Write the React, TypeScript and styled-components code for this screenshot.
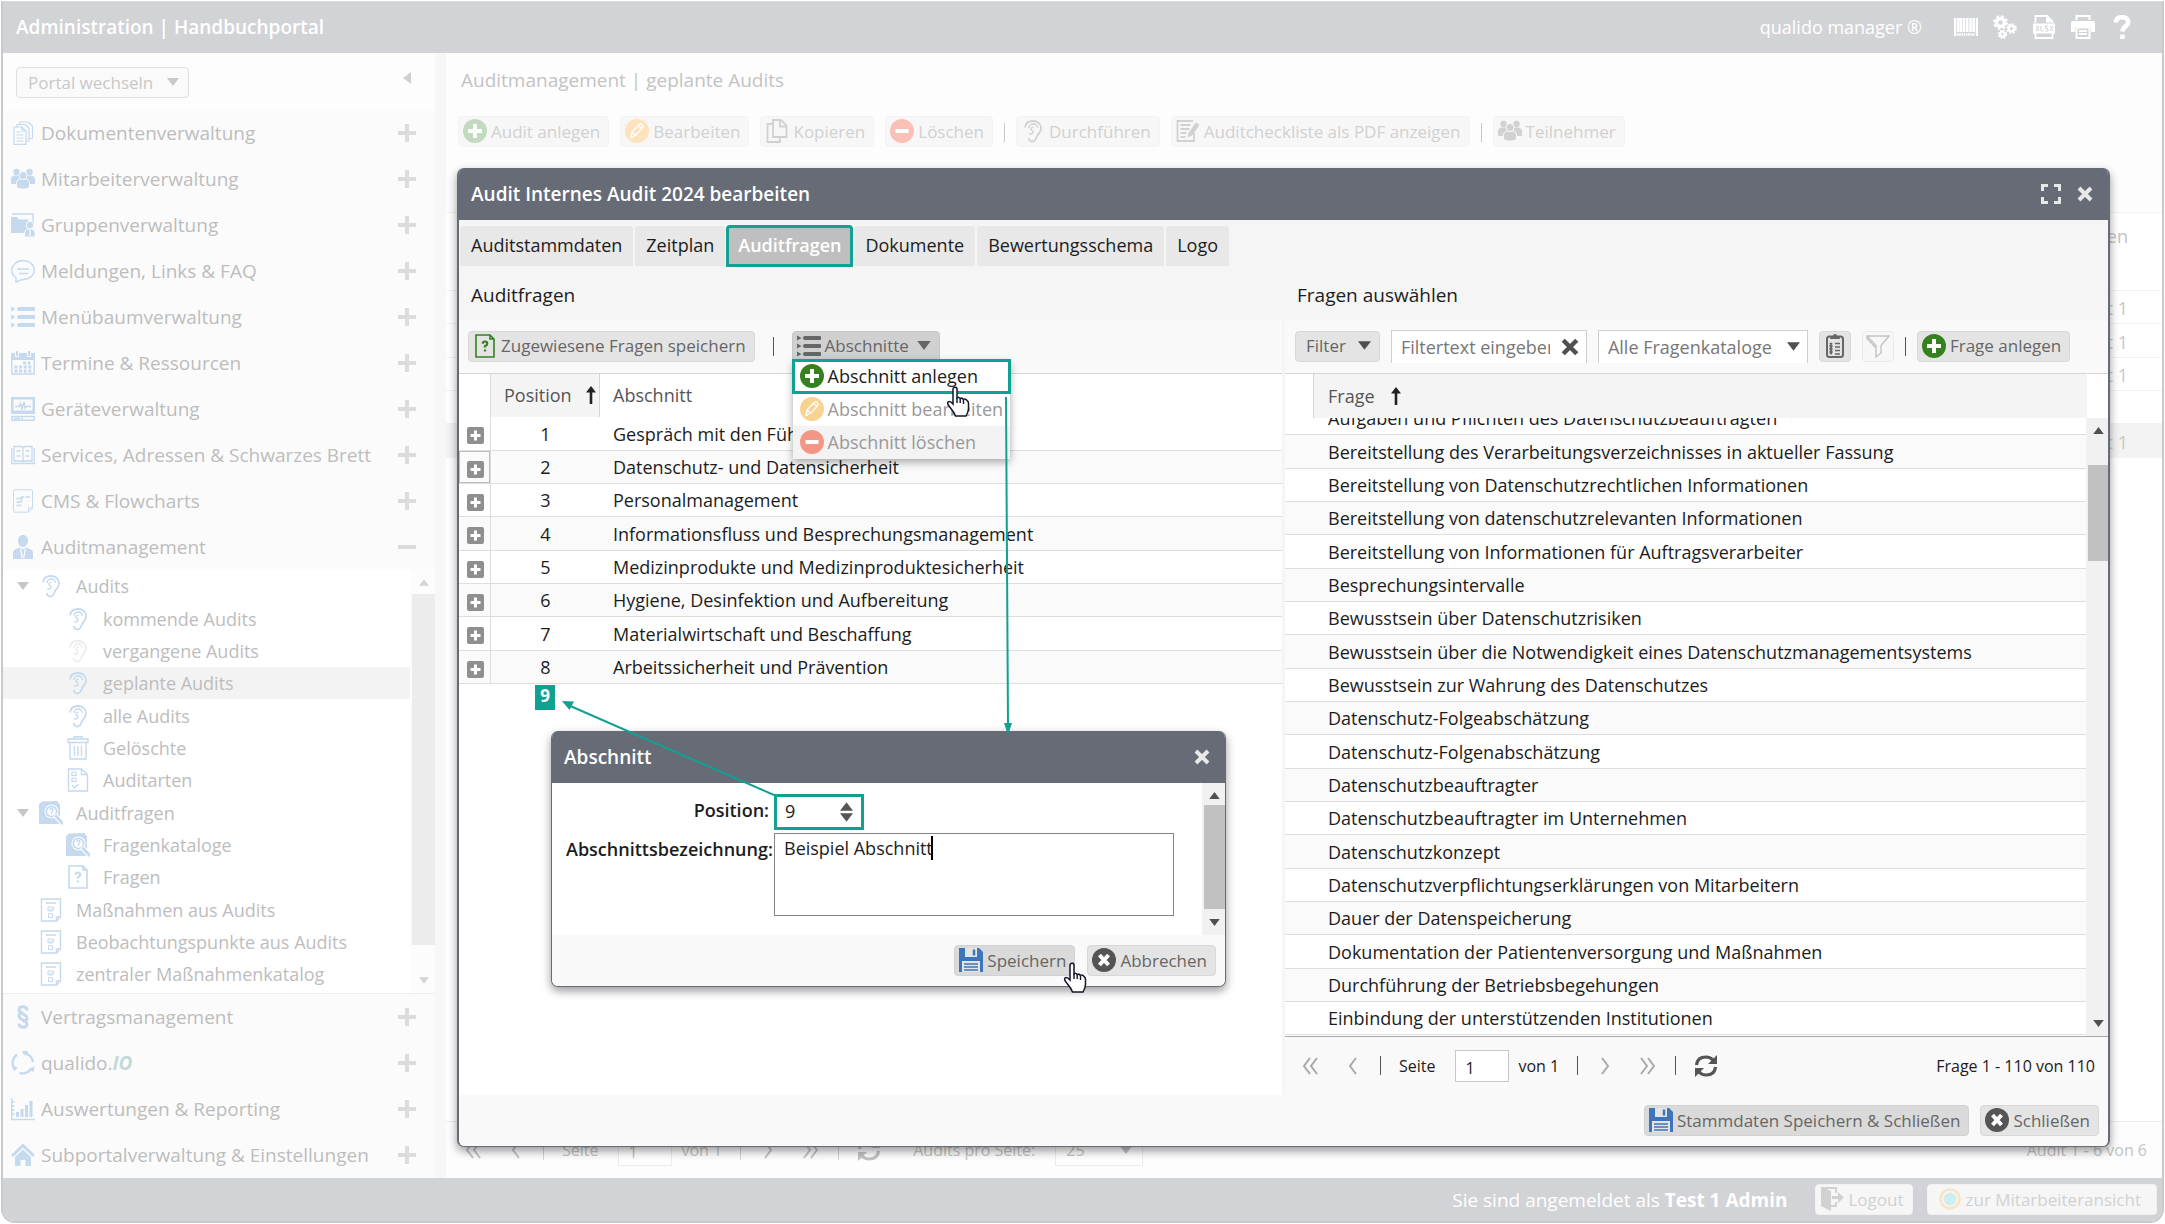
import React from "react";
import styled, { createGlobalStyle, css } from "styled-components";

const GREEN = "#10a192";
const SLATE = "#666b76";

const GlobalStyle = createGlobalStyle`
  *, *::before, *::after { box-sizing: border-box; }
  body { margin: 0; background: #fff; font-family: "Open Sans", "Noto Sans", sans-serif; font-size: 18px; color: #1c1c1c; }
  button, input, select, textarea { font: inherit; color: inherit; margin: 0; }
  button { cursor: pointer; }
  h1, h2, p { margin: 0; font-weight: inherit; font-size: inherit; }
`;

/* ---------- icons ---------- */

const Svg = styled.svg<{ $w?: number; $h?: number }>`
  display: block;
  flex: none;
  width: ${(p) => p.$w ?? 24}px;
  height: ${(p) => p.$h ?? p.$w ?? 24}px;
  fill: none;
  stroke: currentColor;
  stroke-width: 1.4;
`;

type IconProps = { color?: string };
const solid = { fill: "currentColor", stroke: "none" };

const PlusCircle = ({ color = "#35801f" }: IconProps) => (
  <Svg viewBox="0 0 24 24" aria-hidden="true">
    <circle cx="12" cy="12" r="12" fill={color} stroke="none" />
    <path d="M12 5v14M5 12h14" stroke="#fff" strokeWidth="4" />
  </Svg>
);
const MinusCircle = ({ color = "#f39685" }: IconProps) => (
  <Svg viewBox="0 0 24 24" aria-hidden="true">
    <circle cx="12" cy="12" r="12" fill={color} stroke="none" />
    <path d="M5.500 12h13" stroke="#fff" strokeWidth="4" />
  </Svg>
);
const PencilCircle = ({ color = "#f8d290" }: IconProps) => (
  <Svg viewBox="0 0 24 24" aria-hidden="true">
    <circle cx="12" cy="12" r="12" fill={color} stroke="none" />
    <path d="M6 18.500l1-5.500 7.500-8q2-1 4 2.500L11 16zM7 13l4 3M13 6.500l4 3" stroke="#fff" strokeWidth="1.300" />
  </Svg>
);
const CloseCircle = () => (
  <Svg viewBox="0 0 24 24" aria-hidden="true">
    <circle cx="12" cy="12" r="12" fill="#555" stroke="none" />
    <path d="M7.500 7l9 10M16.500 7l-9 10" stroke="#fff" strokeWidth="4" />
  </Svg>
);
const Floppy = () => (
  <Svg viewBox="0 0 24 24" aria-hidden="true">
    <path d="M0 0h20l4 4v20H0z" fill="#3c75bb" stroke="none" />
    <path d="M6 0h12v9H6zM3 13h18v11H3z" fill="#e4e4e4" stroke="none" />
    <path d="M15 1.500v6" stroke="#3c75bb" strokeWidth="2.500" />
    <path d="M5 16h14M5 19h14M5 22h14" stroke="#3c75bb" strokeWidth="1.500" />
  </Svg>
);
const Ear = () => (
  <Svg viewBox="0 0 24 24" aria-hidden="true">
    <path d="M4 8.500C4.500 4 8 2 12 2c4.700 0 8 3 8 7.500 0 4-3 5-4.200 8.200C15 20 14 22.500 11.500 22.500S8 21 7.800 19" strokeWidth="1.800" />
    <path d="M8 9c0-2.500 2-4 4.200-4 2.400 0 4.300 1.800 4.300 4M12.500 8.500c-1.500-.5-2.700.5-2.500 1.800.2 1.200 2 1 2 2.700 0 1.800-2.200 2.500-4 1.500" />
  </Svg>
);
const People = () => (
  <Svg viewBox="0 0 24 24" aria-hidden="true">
    <g {...solid}>
      <circle cx="5.500" cy="5" r="3.200" />
      <circle cx="18.500" cy="5" r="3.200" />
      <path d="M0 16v-4c0-2 2-3.500 4.500-3.500H9l2 8.500H1q-1 0-1-1zM24 16v-4c0-2-2-3.500-4.500-3.500H15L13 17h10q1 0 1-1z" />
    </g>
    <g fill="currentColor" stroke="#fafafa" strokeWidth="1">
      <path d="M5.500 19v-3c0-2.500 2-4 4.500-4h4c2.500 0 4.500 1.500 4.500 4v3c0 2-2.500 3-6.500 3s-6.500-1-6.500-3z" />
      <circle cx="12" cy="8.500" r="4" />
    </g>
  </Svg>
);
const Docs = () => (
  <Svg viewBox="0 0 24 24" aria-hidden="true">
    <path d="M3 6h8l4 4v13.300H3zM11 6v4h4M6 6V3.500h8.500l3.500 4V20h-3M9 3.500V1h8.500L21.500 5v12.500H18" strokeWidth="1.200" />
    <path d="M5.500 11h4M5.500 14h7M5.500 17h7M5.500 20h7" strokeWidth="1.200" />
  </Svg>
);
const FolderUser = () => (
  <Svg viewBox="0 0 24 24" aria-hidden="true">
    <path d="M2 2V1h20v10" />
    <path {...solid} d="M0 4h6l2 2.500h9V20H0z" />
    <g fill="currentColor" stroke="#fafafa" strokeWidth="1">
      <path d="M13.500 24v-4q0-3.500 3.500-4h4q3 .5 3 4v4z" />
      <circle cx="19" cy="12" r="3.800" />
    </g>
    <path d="M19 17v6" stroke="#fafafa" />
  </Svg>
);
const Speech = () => (
  <Svg viewBox="0 0 24 24" aria-hidden="true">
    <path d="M5 23.300V18.500C2.300 17 .8 14.500.8 11.500.8 6 5.800 1.500 12 1.500s11.200 4.200 11.200 9.700S18 20.500 12 20.500q-4 .3-7 2.800zM6 10h12M8 14.500h9" />
  </Svg>
);
const ListIcon = () => (
  <Svg viewBox="0 0 24 24" aria-hidden="true">
    <path {...solid} d="M0 1.500l4.500 2.500L0 6.500zM0 9.500L4.500 12 0 14.500zM0 17.500L4.500 20 0 22.500z" />
    <path d="M8 4h14.500M8 12h14.500M8 20h14.500" strokeWidth="4" strokeLinecap="round" />
  </Svg>
);
const Calendar = () => (
  <Svg viewBox="0 0 24 24" aria-hidden="true">
    <path d="M.8 3h22.400v20H.8z" />
    <path {...solid} d="M0 2h24v7H0z" />
    <path d="M6 0v6M18 0v6" stroke="#fafafa" strokeWidth="4" />
    <path d="M6 0v5M18 0v5" strokeWidth="2" />
    <path d="M3.500 20h17M3.500 16h17M12 12h8.500" strokeWidth="3" strokeDasharray="3 1.600" />
  </Svg>
);
const Monitor = () => (
  <Svg viewBox="0 0 24 24" aria-hidden="true">
    <path {...solid} d="M0 0h24v17H0z" />
    <path d="M2.500 2.500h19v11h-19z" fill="#fafafa" stroke="none" />
    <path d="M4 9.500h4l1.500-3L11 12l2-7 1 6 1.500-1.500H20" strokeWidth="1.600" />
    <path d="M.8 19.500h22.400v3.800H.8zM11 19.500v3.800M3 21.500h6" />
  </Svg>
);
const Book = () => (
  <Svg viewBox="0 0 24 24" aria-hidden="true">
    <path d="M.8 5v15.500h22.400V5M3 18V3.500h6.500q2.500 0 2.500 1.500 0-1.500 2.500-1.500H21V18h-7q-2 0-2 1.500Q12 18 10 18zM12 5v14M5.500 8h4M5.500 13h4M14.500 8h4M14.500 13h4" strokeWidth="1.300" />
  </Svg>
);
const Flow = () => (
  <Svg viewBox="0 0 24 24" aria-hidden="true">
    <path d="M4 .8h16q1.500 0 1.500 1.500V19l-4 4.200H4q-1.500 0-1.500-1.500V2.300Q2.500.8 4 .8zM21.500 19h-4v4" strokeWidth="1" />
    <path d="M5.500 9.500h5M5.500 13h5M5.500 16.500h5M10.500 13V8h3M15 8h4" />
  </Svg>
);
const UserTie = () => (
  <Svg viewBox="0 0 24 24" aria-hidden="true">
    <path {...solid} d="M12 0c3.200 0 5 2.300 5 5.500S15 12 12 12 7 8.700 7 5.500 8.800 0 12 0zM2 24v-6q0-3 3-4l4-1.500 3 2 3-2 4 1.500q3 1 3 4v6z" />
    <path d="M9.500 13.500L11.300 23M14.500 13.500L12.700 23" stroke="#fafafa" />
  </Svg>
);
const Paragraph = () => (
  <Svg viewBox="0 0 24 24" aria-hidden="true">
    <path d="M16 5.500Q16 1.800 12 1.800T8 5c0 3.500 8 4 8 8 0 2.500-2 3.500-4 3.500M8 18.500Q8 22.200 12 22.200T16 19c0-3.500-8-4-8-8 0-2.500 2-3.500 4-3.500" strokeWidth="3" />
  </Svg>
);
const Cycle = () => (
  <Svg viewBox="0 0 24 24" aria-hidden="true">
    <path d="M12 1.800A10.500 10.500 0 0 1 22 11M20.500 17A10.500 10.500 0 0 1 8.500 22M3.500 18A10.500 10.500 0 0 1 6 3.500" strokeWidth="2.400" />
    <path {...solid} d="M11 0h6l-2 5zM23.500 15l-1 6-4.500-2zM1 14l6 3-4 3z" />
  </Svg>
);
const Chart = () => (
  <Svg viewBox="0 0 24 24" aria-hidden="true">
    <path d="M.8 1v21.500H24M1 5h2.500M1 9h2.500M1 13h2.500M1 17h2.500" />
    <path d="M6.500 20v-5M11 20v-8M15.500 20V8M20 20V4" strokeWidth="3" />
  </Svg>
);
const House = () => (
  <Svg viewBox="0 0 24 24" aria-hidden="true">
    <path d="M1 13L12 2.500 23 13" strokeWidth="3" />
    <path {...solid} d="M4 14l8-7.500 8 7.500v9h-5.500v-6h-5v6H4z" />
  </Svg>
);
const Trash = () => (
  <Svg viewBox="0 0 24 24" aria-hidden="true">
    <path d="M2 3h20v3.500H2zM8 3V.8h8V3M4 6.500V23h16V6.500M8.500 10v10M12 10v10M15.500 10v10" />
  </Svg>
);
const SheetList = () => (
  <Svg viewBox="0 0 24 24" aria-hidden="true">
    <path d="M2.500 1h13l6 5.500V23h-19zM15.500 1v5.500h6" />
    <path d="M6 4h4v3.500H6zM6 10h4v3.500H6zM6 17l2.500 3 4-4" strokeWidth="1.200" />
  </Svg>
);
const BookSearch = () => (
  <Svg viewBox="0 0 24 24" aria-hidden="true">
    <path {...solid} d="M0 3l3-2.500L19 0v2l2 1v18l-1 2H0z" />
    <circle cx="12.500" cy="10.500" r="7" fill="#fff" stroke="none" />
    <circle cx="12.500" cy="10.500" r="5.200" strokeWidth="1.800" />
    <path d="M16 14l8 9" stroke="#fff" strokeWidth="5" />
    <path d="M16.500 14.500l7.500 8.500" strokeWidth="3" />
    <path d="M11 9.500q0-2 1.500-2T14 9t-1.500 2v2" strokeWidth="1.300" />
  </Svg>
);
const SheetQuestion = ({ color }: IconProps) => (
  <Svg viewBox="0 0 24 24" aria-hidden="true" color={color}>
    <path d="M3 1h14l4 4v18H3zM17 1v4h4" strokeWidth="1.600" />
    <path d="M9.800 9.800q0-2.300 2.200-2.300t2.200 2-2.200 2.500v1.500M12 15.500v2" strokeWidth="2.200" />
  </Svg>
);
const SheetCheck = () => (
  <Svg viewBox="0 0 24 24" aria-hidden="true">
    <path d="M2.500 1h19v18l-4 4h-15zM21.500 19h-4v4M7 5h10" />
    <path d="M9 9h5v4H9zM10 11l2 1.500L15.500 9M9.500 15.500h4v4h-4z" strokeWidth="1" />
  </Svg>
);
const CopyIcon = () => (
  <Svg viewBox="0 0 24 24" aria-hidden="true">
    <path d="M8 1h8l5.500 5.500V18H8zM15 1v6.500h6.500M8 5H2.500v18H15v-5" strokeWidth="1.800" />
  </Svg>
);
const Checklist = () => (
  <Svg viewBox="0 0 24 24" aria-hidden="true">
    <path d="M17 2H1.500v20H18v-8M4.500 6h10M4.500 10h9M4.500 14h6M4.500 18h5" strokeWidth="1.800" />
    <path d="M13 14L20 4l3 2-7 10-4 2z" fill="currentColor" strokeWidth="1" />
  </Svg>
);
const Logout = () => (
  <Svg viewBox="0 0 24 24" aria-hidden="true">
    <path d="M2 1h14v5M16 15v4h-5" strokeWidth="2" />
    <path {...solid} d="M1 0l10 4v20L1 19zM12 9h6V5l6 5.500-6 5.500v-4h-6z" />
  </Svg>
);
const Sun = () => (
  <Svg viewBox="0 0 24 24" aria-hidden="true">
    <circle cx="12" cy="12" r="9.500" stroke="#fae3c3" strokeWidth="2.500" />
    <circle cx="12" cy="12" r="6.500" fill="#cfeeee" stroke="none" />
  </Svg>
);
const Barcode = () => (
  <Svg viewBox="0 0 24 24" aria-hidden="true">
    <path d="M1 3v18M4.200 3v14M7 3v14M10 3v14M13.200 3v14M16.500 3v14M19.600 3v14M23 3v18" strokeWidth="2.500" />
    <path d="M3 19.500h18" strokeWidth="2.500" strokeDasharray="1.500 .7" />
  </Svg>
);
const Gears = () => (
  <Svg viewBox="0 0 24 24" aria-hidden="true">
    <circle cx="7.500" cy="7.500" r="4" strokeWidth="3.500" />
    <circle cx="7.500" cy="7.500" r="6.300" strokeWidth="2.200" strokeDasharray="2.600 2.350" />
    <circle cx="18.500" cy="13.500" r="2.800" strokeWidth="2.600" />
    <circle cx="18.500" cy="13.500" r="4.600" strokeWidth="1.600" strokeDasharray="1.900 1.710" />
    <circle cx="9.500" cy="19.300" r="2.400" strokeWidth="2.400" />
    <circle cx="9.500" cy="19.300" r="4" strokeWidth="1.400" strokeDasharray="1.700 1.440" />
  </Svg>
);
const Xlsx = () => (
  <Svg viewBox="0 0 24 24" aria-hidden="true">
    <path d="M3.500 8V1H15l5.500 5.500V8M3.500 18v5h17v-5" strokeWidth="1.800" />
    <path {...solid} d="M14 1v6.500h6.500zM1 8.500h22v10H1z" />
    <path d="M4 11l3 5M7 11l-3 5M9 11v5h2.500M16 11h-2.500v2.500H16V16h-2.500M18 11l3 5M21 11l-3 5" stroke="#d2d3d7" strokeWidth="1" />
  </Svg>
);
const Printer = () => (
  <Svg viewBox="0 0 24 24" aria-hidden="true">
    <path d="M5.500 5V1h13v4" strokeWidth="2" />
    <path {...solid} d="M2 6h20q2 0 2 2v9h-4v-5H4v5H0V8q0-2 2-2z" />
    <path d="M5.500 12.500h13V23h-13zM8 16h8M8 19h8" strokeWidth="2" />
  </Svg>
);
const Help = () => (
  <Svg viewBox="0 0 24 24" aria-hidden="true">
    <path d="M5.800 7.500C6 3.800 8.500 2.200 12 2.200s6.200 1.600 6.200 4.800c0 4.500-5.700 4-5.700 9.500M12.500 19.500V24" strokeWidth="4.600" />
  </Svg>
);
const PlusBar = ({ minus }: { minus?: boolean }) => (
  <Svg viewBox="0 0 18 18" $w={18} aria-hidden="true">
    <path d={minus ? "M0 9h18" : "M0 9h18M9 0v18"} stroke="#dcdcdc" strokeWidth="4" />
  </Svg>
);
const Caret = ({ up, size = 12 }: { up?: boolean; size?: number }) => (
  <Svg viewBox="0 0 12 8" $w={size} $h={Math.round((size * 2) / 3)} aria-hidden="true">
    <path {...solid} d={up ? "M0 8h12L6 0z" : "M0 0h12L6 8z"} />
  </Svg>
);
const SortUp = () => (
  <Svg viewBox="0 0 10 18" $w={10} $h={18} aria-hidden="true">
    <path d="M5 18V4" stroke="#222" strokeWidth="2.600" />
    <path d="M0 6.500L5 0l5 6.500z" fill="#222" stroke="none" />
  </Svg>
);
const Cross = ({ size = 16 }: { size?: number }) => (
  <Svg viewBox="0 0 16 16" $w={size} aria-hidden="true">
    <path d="M2 2l12 12M14 2L2 14" strokeWidth="4" />
  </Svg>
);
const Expand = () => (
  <Svg viewBox="0 0 20 20" $w={20} aria-hidden="true">
    <path d="M1.500 7V1.500H7M13 1.500h5.500V7M18.500 13v5.500H13M7 18.500H1.500V13" strokeWidth="3" />
  </Svg>
);
const Clipboard = () => (
  <Svg viewBox="0 0 24 24" aria-hidden="true">
    <rect x="4" y="2.500" width="16" height="20.500" rx="2.500" strokeWidth="2" />
    <path {...solid} d="M7 5q0-3 3-3 0-2 2-2t2 2q3 0 3 3z" />
    <path d="M7 9l2 3-2 3 2 3-2 2M9 9l-2 3 2 3-2 3 2 2M12 9.500h5M12 13h5M12 16.500h5M12 20h5" strokeWidth="1.500" />
  </Svg>
);
const Funnel = () => (
  <Svg viewBox="0 0 24 24" aria-hidden="true">
    <path d="M1 2h22l-8 9.500V19l-5 4V11.500zM1 2v2.500L10 14" />
  </Svg>
);
const Refresh = () => (
  <Svg viewBox="0 0 24 24" aria-hidden="true">
    <path d="M2.500 11C3 5.500 7 3 12 3q4.500 0 7.500 3.500M21.500 13c-.5 5.500-4.500 8-9.500 8q-4.500 0-7.500-3.500" strokeWidth="3.200" />
    <path {...solid} d="M23 1v9h-9zM1 23v-9h9z" />
  </Svg>
);
const Chevrons = ({ double, right }: { double?: boolean; right?: boolean }) => (
  <Svg viewBox="0 0 18 18" $w={18} aria-hidden="true">
    <path
      d={
        right
          ? double ? "M2 1l6 8-6 8M9 1l6 8-6 8" : "M6 1l6 8-6 8"
          : double ? "M9 1L3 9l6 8M16 1l-6 8 6 8" : "M12 1L6 9l6 8"
      }
      strokeWidth="2"
    />
  </Svg>
);
const ExpandBox = () => (
  <Svg viewBox="0 0 17 17" $w={17} aria-hidden="true">
    <rect width="17" height="17" rx="2" fill="#8f8f8f" stroke="none" />
    <path d="M8.500 3.500v10M3.500 8.500h10" stroke="#fff" strokeWidth="3" />
  </Svg>
);
const Hand = () => (
  <Svg viewBox="0 0 24 32" $w={24} $h={32} aria-hidden="true">
    <path
      d="M8 1.500q2-1 3 1V12q2-1.500 3 .5 2-1 3.200.8 2.500-.8 3.800 1.200 1.500.8 1.500 3v5q0 3-2.500 7.500H9.500Q8 26 4.500 22q-4-4.500-2.500-6 2-1.500 5 2V3q0-1 1-1.500z"
      fill="#fff" stroke="#15152a" strokeWidth="1.500"
    />
    <path d="M11 12v5M14.200 13v4M17.500 14v4" stroke="#15152a" />
  </Svg>
);

/* ---------- page shell ---------- */

const Page = styled.div`
  position: relative;
  min-height: 100vh;
  padding: 1px;
  display: flex;
`;
const Frame = styled.div`
  flex: 1;
  display: flex;
  flex-direction: column;
  border: 2px solid #c8c9cb;
  border-top: 1px solid #d9dcda;
  border-radius: 0 0 14px 14px;
  overflow: hidden;
`;
const TopBar = styled.header`
  display: flex;
  align-items: center;
  height: 51px;
  padding: 0 28px 1px 13px;
  background: #d2d3d7;
  color: #fff;
  font-size: 19px;
  font-weight: 550;
`;
const TopTools = styled.div`
  display: flex;
  align-items: center;
  gap: 15px;
  margin-left: auto;
  font-size: 18px;
  font-weight: 500;
  > span { margin-right: 17px; }
`;
const PlainButton = styled.button`
  display: flex;
  align-items: center;
  padding: 0;
  border: 0;
  background: none;
`;
const Middle = styled.div`
  flex: 1;
  display: flex;
  min-height: 0;
`;
const Footer = styled.footer`
  display: flex;
  align-items: center;
  justify-content: flex-end;
  gap: 14px;
  height: 43px;
  padding-right: 5px;
  background: #d2d3d7;
  color: #fff;
  font-size: 19px;
  p { margin-right: 14px; }
`;

/* ---------- sidebar ---------- */

const Sidebar = styled.nav`
  flex: none;
  width: 432px;
  display: flex;
  flex-direction: column;
  background: #fbfbfb;
  color: #bdbdbd;
`;
const SideHead = styled.div`
  display: flex;
  align-items: flex-start;
  justify-content: space-between;
  height: 57px;
  padding: 14px 24px 0 13px;
  background: #fdfdfd;
`;
const PortalButton = styled.button`
  display: flex;
  align-items: center;
  justify-content: space-between;
  width: 173px;
  height: 31px;
  padding: 0 9px 1px 11px;
  border: 1px solid #dfdfdf;
  border-radius: 4px;
  background: #fafafa;
  color: #c8c8c8;
  font-size: 17px;
`;
const Collapse = styled(PlainButton)`
  margin-top: 5px;
  color: #d0d0d0;
`;
const SideItem = styled.button`
  flex: none;
  display: flex;
  align-items: center;
  gap: 6px;
  height: 46px;
  padding: 0 19px 1px 8px;
  border: 0;
  background: none;
  font-size: 19px;
  text-align: left;
  > svg:first-child { color: #c5d9ef; }
  > span { flex: 1; }
  i { color: #c1dad9; font-weight: 700; }
`;
const TreeWrap = styled.div`
  flex: 1;
  display: flex;
  min-height: 0;
  border-bottom: 1px solid #efefef;
  background: #fff;
  overflow: hidden;
`;
const Tree = styled.div`
  flex: 1;
`;
const TreeRow = styled.button<{ $level: number; $active?: boolean; $muted?: boolean }>`
  display: flex;
  align-items: center;
  width: 100%;
  height: 32px;
  padding: 0 0 0 ${(p) => (p.$level === 2 ? 63 : 14)}px;
  border: 0;
  background: ${(p) => (p.$active ? "#f3f3f3" : "none")};
  font-size: 18px;
  text-align: left;
  &:nth-child(3n + 2) { height: 33px; }
  > svg { color: ${(p) => (p.$muted ? "#ececec" : "#c5d9ef")}; }
  > span:last-child { margin-left: 13px; }
`;
const Twist = styled.span`
  width: 22px;
  color: #c6c6c6;
`;
const ScrollTrack = styled.div<{ $bg?: string; $w?: number; $color?: string }>`
  flex: none;
  display: flex;
  flex-direction: column;
  align-items: center;
  justify-content: space-between;
  width: ${(p) => p.$w ?? 22}px;
  padding: 9px 0 9px 2px;
  background: ${(p) => p.$bg ?? "#f1f1f1"};
  color: ${(p) => p.$color ?? "#505050"};
`;
const Thumb = styled.div<{ $color: string; $top: number; $rest: number }>`
  align-self: stretch;
  flex: 1 1 0;
  margin: ${(p) => p.$top}px 0 ${(p) => p.$rest}px;
  background: ${(p) => p.$color};
`;
const Splitter = styled.div`
  flex: none;
  width: 11px;
  background: #f7f7f7;
`;

/* ---------- shared controls ---------- */

type Tone = "normal" | "pressed" | "hover" | "faded" | "footer" | "ghost";
const tones: Record<Tone, ReturnType<typeof css>> = {
  normal: css`background: #e4e4e4; border-color: #d8d8d8; color: #666;`,
  hover: css`background: #dadada; border-color: #d2d2d2; color: #666;`,
  pressed: css`background: #d0d0d0; border-color: #c6c6c6; color: #666;`,
  faded: css`background: #f7f7f7; border-color: #f3f3f3; color: #d1d1d1;`,
  footer: css`background: #f6f6f7; border-color: #f1f1f1; color: #d1d1d1;`,
  ghost: css`background: #f7f7f7; border-color: #e9e9e9; color: #c4c4c4;`,
};
const Button = styled.button<{ $tone?: Tone; $square?: boolean; $wide?: boolean }>`
  flex: none;
  display: flex;
  align-items: center;
  gap: 4px;
  height: 31px;
  padding: ${(p) => (p.$square ? "0 3px" : p.$wide ? "0 15px 1px 10px" : "0 8px 1px 4px")};
  border: 1px solid;
  border-radius: 4px;
  font-size: 17px;
  white-space: nowrap;
  ${(p) => tones[p.$tone ?? "normal"]}
`;
const DropButton = styled(Button)`
  gap: 12px;
  padding: 0 8px 1px 10px;
  svg { color: #505050; }
`;
const Sep = styled.span<{ $color?: string }>`
  flex: none;
  width: 1px;
  height: 19px;
  background: ${(p) => p.$color ?? "#555"};
`;

/* ---------- background content ---------- */

const Main = styled.main`
  flex: 1;
  min-width: 0;
  display: flex;
  flex-direction: column;
  color: #c3c3c3;
`;
const MainTitle = styled.h1`
  height: 54px;
  padding-left: 15px;
  line-height: 54px;
  background: #fdfdfd;
  font-size: 19px;
`;
const MainTools = styled.div`
  display: flex;
  align-items: flex-start;
  gap: 11px;
  height: 105px;
  padding: 9px 0 0 12px;
  background: #fdfdfd;
  ${Sep} { margin-top: 7px; }
`;
const BackTable = styled.table`
  width: 100%;
  border-spacing: 0;
  border-top: 1px solid #f3f3f3;
  text-align: right;
  th { height: 78px; padding: 11px 34px 0 0; border-bottom: 1px solid #f3f3f3; font-weight: 400; vertical-align: top; text-align: right; line-height: 24px; }
  td { height: 33px; padding: 2px 34px 0 0; border-bottom: 1px solid #f3f3f3; color: #c9c9c1; line-height: 24px; }
  tr:nth-child(3n + 2) td { height: 34px; }
  tr[aria-selected="true"] td { background: #f3f3f3; }
`;
const BackPager = styled.div`
  display: flex;
  align-items: center;
  gap: 18px;
  height: 57px;
  margin-top: auto;
  padding: 0 15px 0 18px;
  border-top: 1px solid #ececec;
  background: #fdfdfd;
  font-size: 16px;
  > output { margin-left: auto; }
`;
const Group = styled.div<{ $gap: number }>`
  display: flex;
  align-items: center;
  gap: ${(p) => p.$gap}px;
`;
const PagerLabel = styled.label`
  display: flex;
  align-items: center;
  gap: 20px;
`;
const PageInput = styled.input<{ $faded?: boolean }>`
  width: 54px;
  height: 32px;
  padding: 4px 0 0 9px;
  border: 1px solid ${(p) => (p.$faded ? "#ececec" : "#c8c8c8")};
  background: #fff;
`;
const SizeBox = styled.span`
  display: flex;
  align-items: center;
  width: 88px;
  height: 32px;
  padding: 0 10px;
  border: 1px solid #ececec;
  background: #fff;
  select { flex: 1; min-width: 0; padding: 0; border: 0; background: none; appearance: none; }
`;

/* ---------- windows ---------- */

const Window = styled.section`
  display: flex;
  flex-direction: column;
  border: 2px solid ${SLATE};
  border-top: 0;
  border-bottom-width: 1px;
  border-radius: 7px;
  background: #f9f9f9;
  overflow: hidden;
  isolation: isolate;
  box-shadow: 0 4px 10px rgba(0, 0, 0, 0.4);
`;
const AuditWindow = styled(Window)`
  position: absolute;
  inset: 168px 55px 77px 457px;
`;
const SectionWindow = styled(Window)`
  position: absolute;
  top: 731px;
  left: 551px;
  width: 675px;
  height: 256px;
  border-width: 0 1px 1px;
`;
const WindowBar = styled.header`
  flex: none;
  display: flex;
  align-items: center;
  gap: 16px;
  height: 52px;
  padding: 0 15px 1px 12px;
  background: ${SLATE};
  color: #fff;
  font-size: 19px;
  font-weight: 550;
  h2 { flex: 1; }
  button { color: #e8e8e8; }
`;
const Tabs = styled.div`
  flex: none;
  display: flex;
  gap: 2px;
  height: 52px;
  padding: 6px 1px;
  background: #f5f5f5;
`;
const Tab = styled.button<{ $active?: boolean }>`
  height: 40px;
  padding: 0 11px 2px;
  border: 0;
  border-radius: 3px 3px 0 0;
  background: ${(p) => (p.$active ? "#bfbfbf" : "#e8e8e8")};
  color: ${(p) => (p.$active ? "#fff" : "#1c1c1c")};
  font-weight: ${(p) => (p.$active ? 600 : 400)};
  ${(p) => p.$active && css`outline: 3px solid ${GREEN}; outline-offset: -2px;`}
`;
const Panes = styled.div`
  flex: 1;
  display: flex;
  min-height: 0;
`;
const Pane = styled.div`
  flex: 1 1 0;
  min-width: 0;
  display: flex;
  flex-direction: column;
  background: #fff;
  & + & { border-left: 3px solid #f5f5f5; background: #f9f9f9; }
`;
const PaneTitle = styled.h2`
  flex: none;
  height: 48px;
  padding-left: 12px;
  line-height: 46px;
  background: #f5f5f5;
  font-size: 19px;
`;
const PaneTools = styled.div<{ $gap: number; $left: number }>`
  flex: none;
  display: flex;
  align-items: center;
  gap: ${(p) => p.$gap}px;
  height: 54px;
  padding: 0 0 1px ${(p) => p.$left}px;
  border-bottom: 1px solid #d6d6d6;
  background: #f9f9f9;
`;
const MenuAnchor = styled.div`
  position: relative;
`;
const Menu = styled.div`
  position: absolute;
  z-index: 2;
  top: 29px;
  left: 1px;
  width: 217px;
  background: #fff;
  box-shadow: 0 3px 8px rgba(0, 0, 0, 0.35);
`;
const MenuItem = styled.button<{ $on?: boolean }>`
  position: relative;
  z-index: ${(p) => (p.$on ? 1 : 0)};
  display: flex;
  align-items: center;
  gap: 4px;
  width: 100%;
  height: 33px;
  padding: 0 0 0 7px;
  border: 0;
  background: #fff;
  color: ${(p) => (p.$on ? "#1c1c1c" : "#999")};
  white-space: nowrap;
  &:last-child { background: #f3f3f3; }
  ${(p) => p.$on && css`outline: 3px solid ${GREEN}; outline-offset: -2px;`}
`;
const SectionTable = styled.table`
  width: 100%;
  table-layout: fixed;
  border-spacing: 0;
  th { height: 43px; padding: 0 3px 2px 13px; color: #555; font-weight: 400; text-align: left; }
  th:nth-child(1) { width: 32px; border-right: 1px solid #dcdcdc; }
  th:nth-child(2) { width: 109px; border-right: 1px solid #d6d6d6; background: #f4f4f4; }
  td { height: 33px; padding: 0 0 0 13px; border-bottom: 1px solid #dedede; line-height: 24px; }
  td:nth-child(1) { padding: 4px 0 0 8px; border-right: 1px solid #dcdcdc; }
  td:nth-child(2) { padding: 0; text-align: center; }
  tbody tr:nth-child(even) { background: #fafafa; }
  tbody tr:nth-child(3n + 1) td { height: 34px; }
  tbody tr:nth-child(2) td:nth-child(1) { box-shadow: inset 0 0 0 1px #bdbdbd; }
`;
const HeadCell = styled.div`
  display: flex;
  align-items: center;
  justify-content: space-between;
`;
const Field = styled.div<{ $w: number }>`
  flex: none;
  display: flex;
  align-items: center;
  width: ${(p) => p.$w}px;
  height: 33px;
  padding: 0 7px 0 9px;
  border: 1px solid #cfcfcf;
  border-bottom: 0;
  background: #fff;
  color: #777;
  > svg, > button { color: #505050; }
  input, select { flex: 1; min-width: 0; padding: 0; border: 0; background: none; appearance: none; outline: 0; }
  input { margin-right: 11px; }
`;
const ListHead = styled.div`
  flex: none;
  display: flex;
  align-items: center;
  gap: 16px;
  height: 44px;
  margin: 0 21px 0 28px;
  padding-left: 14px;
  border-left: 1px solid #d6d6d6;
  background: #f4f4f4;
  color: #555;
`;
const ListHeadRow = styled.div`
  background: #fff;
`;
const ListBody = styled.div`
  flex: 1;
  display: flex;
  align-items: stretch;
  min-height: 0;
  overflow: hidden;
  border-bottom: 1px solid #a8a8a8;
  background: #fff;
`;
const QuestionTable = styled.table`
  flex: 1;
  display: table;
  width: 100%;
  border-spacing: 0;
  margin-top: -16px;
  align-self: flex-start;
  td { height: 33px; padding: 0 0 0 43px; border-bottom: 1px solid #dedede; line-height: 24px; }
  tr:nth-child(3n + 2) td { height: 34px; }
  tr:nth-child(even) { background: #fafafa; }
`;
const Pager = styled.div`
  flex: none;
  display: flex;
  align-items: center;
  gap: 18px;
  height: 58px;
  padding: 0 13px 1px 16px;
  font-size: 16px;
  button { color: #a9a9a9; }
  > button { color: #555; }
  > output { margin-left: auto; }
`;
const WindowFoot = styled.footer<{ $gap: number }>`
  flex: none;
  display: flex;
  align-items: flex-start;
  justify-content: flex-end;
  gap: ${(p) => p.$gap}px;
  height: 51px;
  padding: 10px 9px 0;
  background: #f9f9f9;
`;
const FormArea = styled.div`
  flex: 1;
  display: flex;
  min-height: 0;
  background: #fff;
`;
const Form = styled.form`
  flex: 1;
  display: grid;
  grid-template-columns: 208px 1fr;
  align-content: start;
  row-gap: 3px;
  padding: 11px 28px 0 14px;
  label { padding-right: 5px; font-weight: 600; text-align: right; line-height: 32px; white-space: nowrap; }
`;
const Spin = styled.div`
  display: flex;
  align-items: center;
  width: 90px;
  height: 36px;
  padding: 0 8px 0 8px;
  border: 3px solid ${GREEN};
  background: #fff;
  input { flex: 1; min-width: 0; padding: 0 0 2px; border: 0; outline: 0; }
`;
const SpinButtons = styled.span`
  display: flex;
  flex-direction: column;
  gap: 2px;
  color: #555;
`;
const TextWrap = styled.div`
  position: relative;
`;
const TextArea = styled.textarea`
  display: block;
  width: 100%;
  height: 83px;
  padding: 1px 9px;
  border: 1px solid #858585;
  resize: none;
  outline: 0;
  line-height: 26px;
`;
const TextCaret = styled.span`
  position: absolute;
  top: 3px;
  left: 157px;
  width: 2px;
  height: 24px;
  background: #000;
`;

/* ---------- annotations ---------- */

const Badge = styled.span`
  position: absolute;
  top: 685px;
  left: 535px;
  width: 20px;
  height: 25px;
  background: ${GREEN};
  color: #fff;
  font-size: 17px;
  font-weight: 700;
  line-height: 22px;
  text-align: center;
`;
const Arrows = styled.svg`
  position: absolute;
  top: 0;
  left: 0;
  width: 1100px;
  height: 820px;
  pointer-events: none;
  stroke: ${GREEN};
  stroke-width: 2;
  fill: none;
`;
const Pointer = styled.div<{ $x: number; $y: number }>`
  position: absolute;
  left: ${(p) => p.$x}px;
  top: ${(p) => p.$y}px;
  pointer-events: none;
`;

/* ---------- data ---------- */

const upperItems = [
  { icon: <Docs />, label: "Dokumentenverwaltung" },
  { icon: <People />, label: "Mitarbeiterverwaltung" },
  { icon: <FolderUser />, label: "Gruppenverwaltung" },
  { icon: <Speech />, label: "Meldungen, Links & FAQ" },
  { icon: <ListIcon />, label: "Menübaumverwaltung" },
  { icon: <Calendar />, label: "Termine & Ressourcen" },
  { icon: <Monitor />, label: "Geräteverwaltung" },
  { icon: <Book />, label: "Services, Adressen & Schwarzes Brett" },
  { icon: <Flow />, label: "CMS & Flowcharts" },
  { icon: <UserTie />, label: "Auditmanagement", open: true },
];
const lowerItems = [
  { icon: <Paragraph />, label: "Vertragsmanagement" },
  { icon: <Cycle />, label: <>qualido.<i>IO</i></> },
  { icon: <Chart />, label: "Auswertungen & Reporting" },
  { icon: <House />, label: "Subportalverwaltung & Einstellungen" },
];
const treeRows = [
  { level: 1, icon: <Ear />, label: "Audits", open: true },
  { level: 2, icon: <Ear />, label: "kommende Audits" },
  { level: 2, icon: <Ear />, label: "vergangene Audits", muted: true },
  { level: 2, icon: <Ear />, label: "geplante Audits", active: true },
  { level: 2, icon: <Ear />, label: "alle Audits" },
  { level: 2, icon: <Trash />, label: "Gelöschte" },
  { level: 2, icon: <SheetList />, label: "Auditarten" },
  { level: 1, icon: <BookSearch />, label: "Auditfragen", open: true },
  { level: 2, icon: <BookSearch />, label: "Fragenkataloge" },
  { level: 2, icon: <SheetQuestion />, label: "Fragen" },
  { level: 1, icon: <SheetCheck />, label: "Maßnahmen aus Audits" },
  { level: 1, icon: <SheetCheck />, label: "Beobachtungspunkte aus Audits" },
  { level: 1, icon: <SheetCheck />, label: "zentraler Maßnahmenkatalog" },
];
const tabs = ["Auditstammdaten", "Zeitplan", "Auditfragen", "Dokumente", "Bewertungsschema", "Logo"];
const sections = [
  "Gespräch mit den Führung",
  "Datenschutz- und Datensicherheit",
  "Personalmanagement",
  "Informationsfluss und Besprechungsmanagement",
  "Medizinprodukte und Medizinproduktesicherheit",
  "Hygiene, Desinfektion und Aufbereitung",
  "Materialwirtschaft und Beschaffung",
  "Arbeitssicherheit und Prävention",
];
const questions = [
  "Aufgaben und Pflichten des Datenschutzbeauftragten",
  "Bereitstellung des Verarbeitungsverzeichnisses in aktueller Fassung",
  "Bereitstellung von Datenschutzrechtlichen Informationen",
  "Bereitstellung von datenschutzrelevanten Informationen",
  "Bereitstellung von Informationen für Auftragsverarbeiter",
  "Besprechungsintervalle",
  "Bewusstsein über Datenschutzrisiken",
  "Bewusstsein über die Notwendigkeit eines Datenschutzmanagementsystems",
  "Bewusstsein zur Wahrung des Datenschutzes",
  "Datenschutz-Folgeabschätzung",
  "Datenschutz-Folgenabschätzung",
  "Datenschutzbeauftragter",
  "Datenschutzbeauftragter im Unternehmen",
  "Datenschutzkonzept",
  "Datenschutzverpflichtungserklärungen von Mitarbeitern",
  "Dauer der Datenspeicherung",
  "Dokumentation der Patientenversorgung und Maßnahmen",
  "Durchführung der Betriebsbegehungen",
  "Einbindung der unterstützenden Institutionen",
];
const backRows = [0, 1, 2, 3, 4];

/* ---------- parts ---------- */

const SideNav = () => (
  <Sidebar aria-label="Navigation">
    <SideHead>
      <PortalButton>Portal wechseln <Caret size={12} /></PortalButton>
      <Collapse aria-label="Navigation einklappen">
        <Svg viewBox="0 0 8 12" $w={8} $h={12}><path {...solid} d="M8 0v12L0 6z" /></Svg>
      </Collapse>
    </SideHead>
    {upperItems.map((it) => (
      <SideItem key={it.label}>{it.icon}<span>{it.label}</span><PlusBar minus={it.open} /></SideItem>
    ))}
    <TreeWrap>
      <Tree>
        {treeRows.map((r) => (
          <TreeRow key={r.label} $level={r.level} $active={r.active} $muted={r.muted}>
            {r.level === 1 && <Twist>{r.open && <Caret size={12} />}</Twist>}
            {r.icon}
            <span>{r.label}</span>
          </TreeRow>
        ))}
      </Tree>
      <ScrollTrack $w={25} $bg="#fcfcfc" $color="#d4d4d4">
        <Caret up size={10} />
        <Thumb $color="#ececec" $top={8} $rest={32} />
        <Caret size={10} />
      </ScrollTrack>
    </TreeWrap>
    {lowerItems.map((it, i) => (
      <SideItem key={i}>{it.icon}<span>{it.label}</span><PlusBar /></SideItem>
    ))}
  </Sidebar>
);

const Background = () => (
  <Main>
    <MainTitle>Auditmanagement | geplante Audits</MainTitle>
    <MainTools>
      <Button $tone="faded"><PlusCircle color="#c2dabd" />Audit anlegen</Button>
      <Button $tone="faded"><PencilCircle color="#fce3bd" />Bearbeiten</Button>
      <Button $tone="faded"><CopyIcon />Kopieren</Button>
      <Button $tone="faded"><MinusCircle color="#f9c0b8" />Löschen</Button>
      <Sep $color="#c8c8c8" />
      <Button $tone="faded"><Ear />Durchführen</Button>
      <Button $tone="faded"><Checklist />Auditcheckliste als PDF anzeigen</Button>
      <Sep $color="#c8c8c8" />
      <Button $tone="faded"><People />Teilnehmer</Button>
    </MainTools>
    <BackTable>
      <thead><tr><th>en</th></tr></thead>
      <tbody>
        {backRows.map((n) => (
          <tr key={n} aria-selected={n === 4}><td>{n === 3 ? "" : "t 1"}</td></tr>
        ))}
      </tbody>
    </BackTable>
    <BackPager>
      <Group $gap={25}><Chevrons double /><Chevrons /></Group>
      <Sep $color="#d4d4d4" />
      <Group $gap={9}>
        <PagerLabel>Seite <PageInput $faded defaultValue="1" /></PagerLabel>
        <span>von 1</span>
      </Group>
      <Sep $color="#d4d4d4" />
      <Group $gap={25}><Chevrons right /><Chevrons double right /></Group>
      <Sep $color="#d4d4d4" />
      <Group $gap={32}>
        <Refresh />
        <PagerLabel>Audits pro Seite:
          <SizeBox>
            <select defaultValue="25"><option>25</option></select>
            <Caret size={12} />
          </SizeBox>
        </PagerLabel>
      </Group>
      <output>Audit 1 - 6 von 6</output>
    </BackPager>
  </Main>
);

const LeftPane = () => (
  <Pane>
    <PaneTitle>Auditfragen</PaneTitle>
    <PaneTools $gap={18} $left={9}>
      <Button><SheetQuestion color="#35801f" />Zugewiesene Fragen speichern</Button>
      <Sep />
      <MenuAnchor>
        <Button $tone="pressed" aria-haspopup="menu" aria-expanded="true">
          <ListIcon />Abschnitte&nbsp;<Caret size={14} />
        </Button>
        <Menu role="menu">
          <MenuItem role="menuitem" $on><PlusCircle />Abschnitt anlegen</MenuItem>
          <MenuItem role="menuitem"><PencilCircle />Abschnitt bearbeiten</MenuItem>
          <MenuItem role="menuitem"><MinusCircle />Abschnitt löschen</MenuItem>
        </Menu>
      </MenuAnchor>
    </PaneTools>
    <SectionTable>
      <thead>
        <tr>
          <th aria-label="Aufklappen" />
          <th><HeadCell>Position <SortUp /></HeadCell></th>
          <th>Abschnitt</th>
        </tr>
      </thead>
      <tbody>
        {sections.map((s, i) => (
          <tr key={s}>
            <td><PlainButton aria-label={`Abschnitt ${i + 1} aufklappen`}><ExpandBox /></PlainButton></td>
            <td>{i + 1}</td>
            <td>{s}</td>
          </tr>
        ))}
      </tbody>
    </SectionTable>
  </Pane>
);

const RightPane = () => (
  <Pane>
    <PaneTitle>Fragen auswählen</PaneTitle>
    <PaneTools $gap={11} $left={10}>
      <DropButton>Filter <Caret size={13} /></DropButton>
      <Field $w={196}>
        <input aria-label="Filtertext" defaultValue="Filtertext eingeben" />
        <PlainButton aria-label="Filter leeren"><Cross size={18} /></PlainButton>
      </Field>
      <Field $w={210}>
        <select aria-label="Fragenkatalog" defaultValue="Alle Fragenkataloge"><option>Alle Fragenkataloge</option></select>
        <Caret size={13} />
      </Field>
      <Button $square aria-label="Checkliste"><Clipboard /></Button>
      <Button $square $tone="ghost" aria-label="Filtern"><Funnel /></Button>
      <Sep />
      <Button><PlusCircle />Frage anlegen</Button>
    </PaneTools>
    <ListHeadRow><ListHead>Frage <SortUp /></ListHead></ListHeadRow>
    <ListBody>
      <QuestionTable>
        <tbody>{questions.map((q) => <tr key={q}><td>{q}</td></tr>)}</tbody>
      </QuestionTable>
      <ScrollTrack>
        <Caret up size={11} />
        <Thumb $color="#c1c1c1" $top={31} $rest={459} />
        <Caret size={11} />
      </ScrollTrack>
    </ListBody>
    <Pager>
      <Group $gap={25}>
        <PlainButton aria-label="Erste Seite"><Chevrons double /></PlainButton>
        <PlainButton aria-label="Vorherige Seite"><Chevrons /></PlainButton>
      </Group>
      <Sep />
      <Group $gap={9}>
        <PagerLabel>Seite <PageInput defaultValue="1" /></PagerLabel>
        <span>von 1</span>
      </Group>
      <Sep />
      <Group $gap={25}>
        <PlainButton aria-label="Nächste Seite"><Chevrons right /></PlainButton>
        <PlainButton aria-label="Letzte Seite"><Chevrons double right /></PlainButton>
      </Group>
      <Sep />
      <PlainButton aria-label="Aktualisieren"><Refresh /></PlainButton>
      <output>Frage 1 - 110 von 110</output>
    </Pager>
  </Pane>
);

const AuditDialog = () => (
  <AuditWindow role="dialog" aria-label="Audit bearbeiten">
    <WindowBar>
      <h2>Audit Internes Audit 2024 bearbeiten</h2>
      <PlainButton aria-label="Maximieren"><Expand /></PlainButton>
      <PlainButton aria-label="Fenster schließen"><Cross /></PlainButton>
    </WindowBar>
    <Tabs role="tablist">
      {tabs.map((t) => <Tab key={t} role="tab" $active={t === "Auditfragen"}>{t}</Tab>)}
    </Tabs>
    <Panes><LeftPane /><RightPane /></Panes>
    <WindowFoot $gap={11}>
      <Button $tone="hover"><Floppy />Stammdaten Speichern &amp; Schließen</Button>
      <Button><CloseCircle />Schließen</Button>
    </WindowFoot>
  </AuditWindow>
);

const SectionDialog = () => (
  <SectionWindow role="dialog" aria-label="Abschnitt">
    <WindowBar>
      <h2>Abschnitt</h2>
      <PlainButton aria-label="Fenster schließen"><Cross /></PlainButton>
    </WindowBar>
    <FormArea>
      <Form>
        <label htmlFor="pos">Position:</label>
        <Spin>
          <input id="pos" defaultValue="9" />
          <SpinButtons><Caret up size={13} /><Caret size={13} /></SpinButtons>
        </Spin>
        <label htmlFor="name">Abschnittsbezeichnung:</label>
        <TextWrap>
          <TextArea id="name" defaultValue="Beispiel Abschnitt" />
          <TextCaret />
        </TextWrap>
      </Form>
      <ScrollTrack $w={23}>
        <Caret up size={11} />
        <Thumb $color="#c1c1c1" $top={6} $rest={10} />
        <Caret size={11} />
      </ScrollTrack>
    </FormArea>
    <WindowFoot $gap={12}>
      <Button $tone="hover"><Floppy />Speichern</Button>
      <Button><CloseCircle />Abbrechen</Button>
    </WindowFoot>
  </SectionWindow>
);

export default function App() {
  return (
    <>
      <GlobalStyle />
      <Page>
        <Frame>
          <TopBar>
            <span>Administration | Handbuchportal</span>
            <TopTools>
              <span>qualido manager ®</span>
              <Barcode /><Gears /><Xlsx /><Printer /><Help />
            </TopTools>
          </TopBar>
          <Middle>
            <SideNav />
            <Splitter />
            <Background />
          </Middle>
          <Footer>
            <p>Sie sind angemeldet als <b>Test 1 Admin</b></p>
            <Button $tone="footer"><Logout />Logout</Button>
            <Button $tone="footer" $wide><Sun />zur Mitarbeiteransicht</Button>
          </Footer>
        </Frame>
        <AuditDialog />
        <SectionDialog />
        <Badge>9</Badge>
        <Arrows viewBox="0 0 1100 820" aria-hidden="true">
          <path d="M1006 397l2 328M774 795L568 705" />
          <path d="M1004 723h8l-4 12zM562 701l12 .5-4.500 8.500z" fill={GREEN} stroke="none" />
        </Arrows>
        <Pointer $x={946} $y={386}><Hand /></Pointer>
        <Pointer $x={1063} $y={962}><Hand /></Pointer>
      </Page>
    </>
  );
}
